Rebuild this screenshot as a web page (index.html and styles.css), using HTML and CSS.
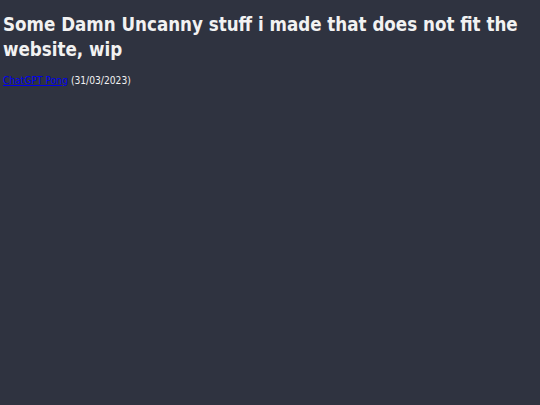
FILE: index.html
```html
<!DOCTYPE html>
<html>
<head>
<meta charset="utf-8">
<link rel="stylesheet" href="styles.css">
</head>
<body>
<h1 class="title">Some Damn Uncanny stuff i made that does not fit the website, wip</h1>
<p class="entry"><a class="link" href="#">ChatGPT Pong</a> (31/03/2023)</p>
</body>
</html>
```

FILE: styles.css
```css
html, body {
  margin: 0;
  background: #2f3340;
}
body {
  padding: 3px;
  color: #f2f2f2;
  font-family: "DejaVu Sans Condensed", "DejaVu Sans", sans-serif;
}
.title {
  font-size: 18.6px;
  font-weight: bold;
  line-height: 25px;
  margin: 9px 0 13px;
}
.entry {
  font-size: 10.2px;
  margin: 0;
}
.link {
  color: #0000ee;
}
```
